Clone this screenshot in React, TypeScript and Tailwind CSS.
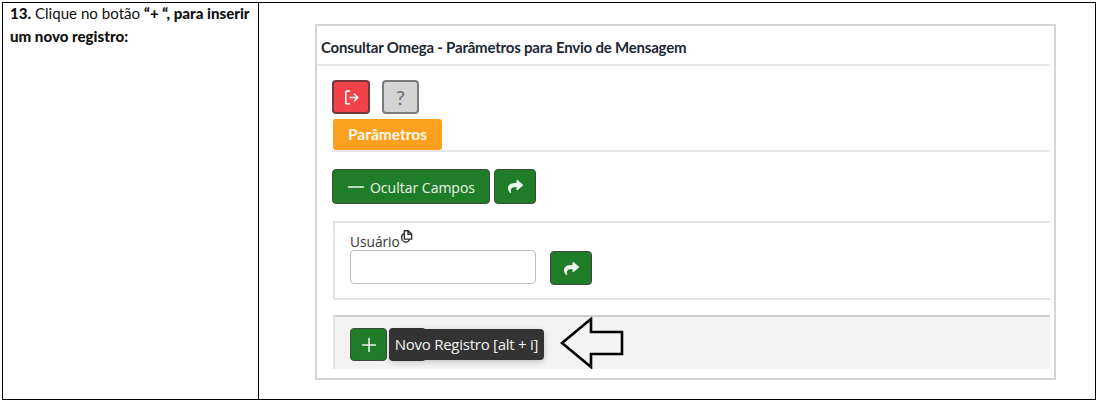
import { Plus, Minus } from "lucide-react";

function ShareIcon({ className }: { className?: string }) {
  return (
    <svg viewBox="0 0 512 512" className={className} fill="currentColor">
      <path d="M503.7 189.8 327.7 37.9C312.3 24.6 288 35.4 288 56v80.1C127.4 137.9 0 170.1 0 322.3c0 61.4 39.6 122.3 83.3 154.1 13.7 9.9 33.1-2.5 28.1-18.6C66 312.6 132.9 274.3 288 272.1V360c0 20.7 24.3 31.4 39.7 18.2l176-152c11.1-9.6 11.1-26.8 0-36.4z" />
    </svg>
  );
}

function GreenButton({ className, children }: { className?: string; children: React.ReactNode }) {
  return (
    <div className={`flex items-center justify-center rounded-[4px] border border-[#3f4a3f] bg-[#1f7d28] text-[#eef5ee] ${className ?? ""}`}>
      {children}
    </div>
  );
}

export default function App() {
  return (
    <div className="h-[404px] w-[1102px] overflow-hidden bg-white pl-[2px] pt-[2px] font-['Lato',sans-serif]">
      <div className="flex h-[398px] w-[1094px] border-x border-b border-t border-black">
        {/* left cell */}
        <div className="w-[256px] shrink-0 border-r border-black pl-[7px] text-[15.1px] leading-[23px] text-[#111]">
          <p className="-mt-[1px] w-[245px]">
            <b className="font-black">13.</b> Clique no botão <b className="font-black">“+ “, para inserir um novo registro:</b>
          </p>
        </div>

        {/* right cell */}
        <div className="pl-[56px] pt-[21px]">
          <div className="h-[356px] w-[741px] border-2 border-[#d4d4d4] pr-[4px]">
            <div className="flex h-[40px] items-center border-b-2 border-[#e6e6e6] pl-[4px] pt-[4px] text-[15px] font-bold tracking-[-0.2px] text-[#1c2733]">
              Consultar Omega - Parâmetros para Envio de Mensagem
            </div>

            <div className="pl-[15px]">
              <div className="flex gap-[12px] pt-[14px]">
                <div className="flex h-[34px] w-[38px] items-center justify-center rounded-[4px] border-2 border-[#70393c] bg-[#f44348] text-white">
                  <svg viewBox="0 0 24 24" className="h-[17px] w-[17px]" fill="none" stroke="currentColor" strokeWidth="2.2" strokeLinecap="round" strokeLinejoin="round">
                    <path d="M9 3H6a2 2 0 0 0-2 2v14a2 2 0 0 0 2 2h3M10 12h11M16 7l5 5-5 5" />
                  </svg>
                </div>
                <div className="flex h-[34px] w-[37px] items-center justify-center rounded-[4px] border-2 border-[#7b7b7b] bg-[#d4d4d4] text-[20px] font-normal text-[#6e6e6e]">?</div>
              </div>

              <div className="mt-[5px] border-b-2 border-[#e6e6e6]">
                <div className="ml-[1px] flex h-[31px] w-[109px] items-center justify-center rounded-[3px] bg-[#fca01e] text-[15.5px] font-bold text-[#fff8ea]">
                  Parâmetros
                </div>
              </div>

              <div className="mt-[17px] flex gap-[4px] font-['Open_Sans',sans-serif]">
                <GreenButton className="h-[35px] w-[158px] gap-[1px] pr-[4px] text-[14px]">
                  <Minus size={26} strokeWidth={1.4} />
                  <span className="pt-[1px]">Ocultar Campos</span>
                </GreenButton>
                <GreenButton className="h-[35px] w-[42px]">
                  <ShareIcon className="h-[15px] w-[15px]" />
                </GreenButton>
              </div>

              <div className="ml-[1px] mt-[17px] h-[79px] rounded-l-[2px] border-y-2 border-l-2 border-[#e2e2e2] pl-[15px] pt-[7px] font-['Open_Sans',sans-serif]">
                <div className="flex h-[20px] items-center pt-[3px] text-[13.7px] leading-none text-[#333]">
                  Usuário
                  <svg viewBox="0 0 14 14" className="mb-[10px] -ml-[1px] h-[15px] w-[15px]" fill="none" stroke="#333" strokeWidth="1.3">
                    <path d="M5 1.6h3.6L11.8 4.8V9.4H5zM8.4 1.6V5h3.4" />
                    <path d="M5 4A4.3 4.3 0 0 0 2.4 8c0 2.4 2 4.3 4.4 4.3A4.4 4.4 0 0 0 10 9.6" />
                  </svg>
                </div>
                <div className="flex items-start gap-[14px]">
                  <div className="h-[34px] w-[186px] rounded-[4px] border border-[#bdbdbd] bg-white" />
                  <GreenButton className="mt-[1px] h-[34px] w-[42px]">
                    <ShareIcon className="h-[15px] w-[15px]" />
                  </GreenButton>
                </div>
              </div>

              <div className="relative ml-[1px] mt-[15px] h-[54px] border-t-2 border-[#cdcdcd] border-l-2 border-l-[#e4e4e4] bg-[#f3f3f3] pl-[15px] pt-[11px] font-['Open_Sans',sans-serif]">
                <GreenButton className="h-[33px] w-[37px]">
                  <Plus size={22} strokeWidth={1.7} />
                </GreenButton>
                <div className="absolute left-[54px] top-[11px] h-[33px] w-[37px] rounded-[4px] bg-[#333]" />
                <div className="absolute left-[54px] top-[12px] flex h-[31px] w-[155px] items-center justify-center rounded-[4px] bg-[#333] text-[15px] tracking-[-0.25px] text-[#f2f2f2] shadow-[0_2px_6px_rgba(0,0,0,0.2)]">
                  Novo Registro [alt + i]
                </div>
                <svg viewBox="0 0 64 52" className="absolute left-[225px] top-[0px] h-[52px] w-[64px]" fill="none" stroke="black" strokeWidth="2.6">
                  <path d="M2 26 31 2v13h31v22H31v13z" />
                </svg>
              </div>
            </div>
          </div>
        </div>
      </div>
    </div>
  );
}
